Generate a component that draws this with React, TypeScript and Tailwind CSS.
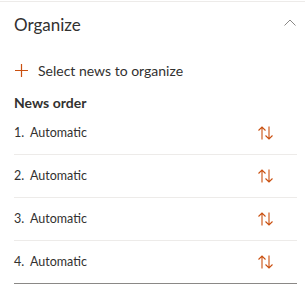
import React from "react";

function SortIcon() {
  return (
    <svg width="18" height="14" viewBox="0 0 18 14" fill="none" stroke="#ca5010" strokeWidth="1.1">
      {/* up arrow */}
      <path d="M5 13.5V1M1.5 4.5L5 1l3.5 3.5" />
      {/* down arrow */}
      <path d="M12 0.5V13M8.5 9.5L12 13l3.5-3.5" />
    </svg>
  );
}

export default function App() {
  const rows = [1, 2, 3, 4];
  return (
    <div className="w-[305px] bg-white pt-px text-[#323130]" style={{ fontFamily: 'Lato, "Open Sans", sans-serif' }}>
      <div className="border-t border-[#edebe9]">
        {/* Header */}
        <div className="flex h-[46px] items-center justify-between pl-[14px] pr-[9px]">
          <span className="text-[17px]">Organize</span>
          <svg width="12" height="7" viewBox="0 0 12 7" fill="none" stroke="#8a8886" strokeWidth="1" className="-mt-[5px]">
            <path d="M0.5 6.5L6 1l5.5 5.5" />
          </svg>
        </div>

        {/* Add */}
        <div className="flex h-[44px] items-center pl-[15px]">
          <svg width="13" height="13" viewBox="0 0 13 13" fill="none" stroke="#ca5010" strokeWidth="1.2">
            <path d="M6.5 0v13M0 6.5h13" />
          </svg>
          <span className="ml-[10px] text-[14px]">Select news to organize</span>
        </div>

        {/* News order */}
        <div className="flex h-[20px] items-center pl-[14px] text-[14px] font-bold">News order</div>

        <div className="ml-[14px] mr-[8px]">
          {rows.map((n, i) => (
            <div
              key={n}
              className={
                i === rows.length - 1
                  ? "flex h-[43px] items-center justify-between border-b border-[#8a8886] pr-[22px]"
                  : "flex h-[43px] items-center justify-between border-b border-[#edebe9] pr-[22px]"
              }
            >
              <span className="text-[12.5px]">
                <span className="inline-block w-[16px]">{n}.</span>Automatic
              </span>
              <SortIcon />
            </div>
          ))}
        </div>
      </div>
    </div>
  );
}
